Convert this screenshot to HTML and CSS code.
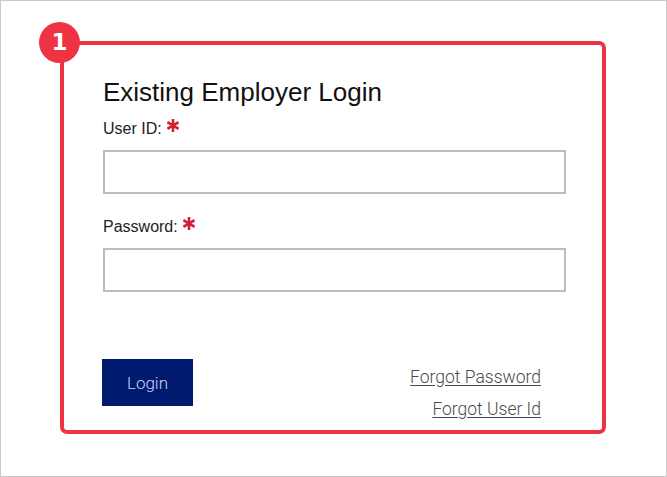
FILE: index.html
```html
<!DOCTYPE html>
<html lang="en">
<head>
<meta charset="utf-8">
<title>Existing Employer Login</title>
<link rel="stylesheet" href="styles.css">
</head>
<body>
<div class="frame">
  <section class="card">
    <span class="badge">1</span>
    <h1 class="title">Existing Employer Login</h1>
    <label class="label" for="uid">User ID:<svg class="req" viewBox="0 0 12 13" width="12" height="13"><g stroke="#d3202f" stroke-width="2.6" stroke-linecap="butt"><line x1="6" y1="0" x2="6" y2="13"/><line x1="0.4" y1="3.2" x2="11.6" y2="9.8"/><line x1="0.4" y1="9.8" x2="11.6" y2="3.2"/></g></svg></label>
    <input class="field" id="uid" type="text">
    <label class="label label-pw" for="pw">Password:<svg class="req" viewBox="0 0 12 13" width="12" height="13"><g stroke="#d3202f" stroke-width="2.6" stroke-linecap="butt"><line x1="6" y1="0" x2="6" y2="13"/><line x1="0.4" y1="3.2" x2="11.6" y2="9.8"/><line x1="0.4" y1="9.8" x2="11.6" y2="3.2"/></g></svg></label>
    <input class="field" id="pw" type="password">
    <div class="actions">
      <button class="login" type="button">Login</button>
      <div class="links">
        <a class="link" href="#">Forgot Password</a>
        <a class="link" href="#">Forgot User Id</a>
      </div>
    </div>
  </section>
</div>
</body>
</html>
```
FILE: styles.css
```css
* { box-sizing: border-box; }
html, body { margin: 0; padding: 0; background: #fff; }
body { width: 667px; height: 477px; overflow: hidden; }
.frame {
  width: 667px;
  height: 477px;
  border: 1px solid #c9c9c9;
  padding: 40px 0 0 59px;
}
.card {
  position: relative;
  width: 546px;
  height: 393px;
  border: 4px solid #ee3443;
  border-radius: 7px;
  padding: 32px 37px 0 39px;
  display: flex;
  flex-direction: column;
  font-family: "Liberation Sans", Arial, sans-serif;
  color: #1a1a1a;
}
.badge {
  position: absolute;
  left: -25px;
  top: -23px;
  width: 41px;
  height: 41px;
  border-radius: 50%;
  background: #ee3443;
  color: #fff;
  font-family: "DejaVu Sans", sans-serif;
  font-weight: bold;
  font-size: 23px;
  line-height: 41px;
  text-align: center;
}
.title {
  margin: 0;
  font-size: 26px;
  font-weight: normal;
  line-height: 30px;
  color: #111;
}
.label {
  display: flex;
  align-items: flex-start;
  margin-top: 12px;
  font-size: 16px;
  line-height: 20px;
  height: 20px;
  color: #222;
}
.label-pw { margin-top: 23px; }
.req { margin-left: 5px; margin-top: 0px; }
.field {
  display: block;
  margin: 11px 0 0 0;
  width: 463px;
  height: 44px;
  border: 2px solid #bdbdbd;
  border-radius: 0;
  padding: 0 8px;
  font-size: 16px;
  background: #fff;
  outline: none;
}
.actions {
  display: flex;
  justify-content: space-between;
  align-items: flex-start;
  margin-top: 67px;
  padding-right: 24px;
}
.login {
  margin-left: -1px;
  width: 91px;
  height: 47px;
  border: none;
  border-radius: 0;
  background: #001a70;
  color: #c9d0f4;
  font-family: Roboto, "Liberation Sans", sans-serif;
  font-size: 17px;
  font-weight: 300;
  cursor: pointer;
}
.links {
  display: flex;
  flex-direction: column;
  align-items: flex-end;
  padding-top: 2px;
}
.link {
  font-family: Roboto, "Liberation Sans", sans-serif;
  font-size: 17.5px;
  font-weight: 300;
  line-height: 32px;
  color: #4a4a4a;
  text-decoration: underline;
  text-underline-offset: 2px;
}
```
